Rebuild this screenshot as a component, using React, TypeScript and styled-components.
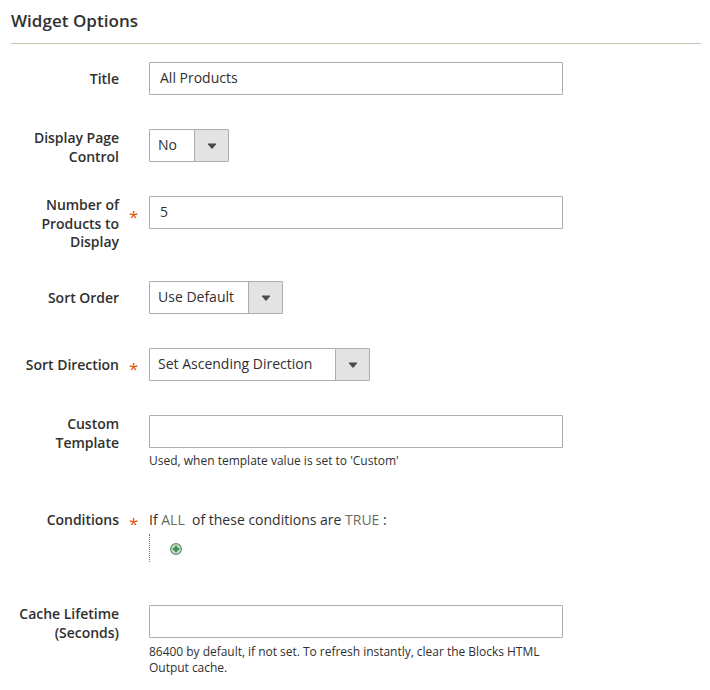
import React from 'react';
import styled, { createGlobalStyle } from 'styled-components';

const Global = createGlobalStyle`
  *{box-sizing:border-box}
  body{margin:0;background:#fff;color:#303030;font-family:"Open Sans",sans-serif;font-size:14px;line-height:19px}
`;
const Form = styled.form`width:710px;height:690px;padding:0 9px 0 11px;overflow:hidden;`;
const Legend = styled.h2`margin:0 0 18px;height:44px;padding-top:9px;border-bottom:1px solid #cac3b4;font-size:17px;line-height:24px;font-weight:600;letter-spacing:.03px;`;
const Row = styled.div<{ $h: number }>`display:grid;grid-template-columns:108px 30px 414px;height:${p => p.$h}px;`;
const Label = styled.label<{ $top?: number }>`font-weight:600;line-height:18.67px;text-align:right;padding-top:${p => p.$top ?? 8}px;white-space:pre-line;letter-spacing:-.03px;`;
const Required = styled.span`color:#eb5202;font-size:17px;line-height:19px;font-weight:500;padding:11px 0 0 10px;`;
const Input = styled.input`display:block;width:414px;height:33px;border:1px solid #adadad;border-radius:1px;padding:0 10px 2px;font:14px "Open Sans",sans-serif;color:#303030;outline:none;background:#fff;`;
const SelectBox = styled.div<{ $w: number }>`display:flex;width:${p => p.$w}px;height:33px;border:1px solid #adadad;border-radius:1px;line-height:30px;padding-left:8px;justify-content:space-between;white-space:nowrap;`;
const Arrow = styled.span`display:flex;align-items:center;justify-content:center;width:34px;height:31px;background:#e3e3e3;border-left:1px solid #adadad;padding:1px 0 0 1px;`;
const Note = styled.p<{ $gap?: number; $tight?: boolean }>`margin:${p => p.$gap ?? 5}px 0 0;font-size:12px;line-height:16px;white-space:pre-line;letter-spacing:${p => p.$tight ? '-.025px' : '0'};`;
const Rule = styled.div`padding-top:7px;white-space:pre;`;
const Value = styled.span`color:#686c60;`;
const Branch = styled.div`display:flex;align-items:center;margin-top:5px;height:28px;border-left:1px dotted #777;padding:2px 0 0 20px;`;

const Select = ({ width, value }: { width: number; value: string }) => (
  <SelectBox $w={width}><span>{value}</span><Arrow><svg width="8" height="6"><path d="M0 .4H8V1.2L4.7 5.6H3.3L0 1.2Z" fill="#514943" /></svg></Arrow></SelectBox>
);
const Field = ({ label, height, top, required, children }: { label: string; height: number; top?: number; required?: boolean; children: React.ReactNode }) => (
  <Row $h={height}><Label $top={top}>{label}</Label><Required>{required ? '*' : ''}</Required><div>{children}</div></Row>
);

export default function App() {
  return <><Global /><Form>
    <Legend>Widget Options</Legend>
    <Field label="Title" height={67}><Input defaultValue="All Products" /></Field>
    <Field label={'Display Page\nControl'} height={67} top={0}><Select width={80} value="No" /></Field>
    <Field label={'Number of\nProducts to\nDisplay'} height={85} top={0} required><Input defaultValue="5" /></Field>
    <Field label="Sort Order" height={67}><Select width={134} value="Use Default" /></Field>
    <Field label="Sort Direction" height={67} required><Select width={221} value="Set Ascending Direction" /></Field>
    <Field label={'Custom\nTemplate'} height={88} top={0}><Input /><Note>Used, when template value is set to 'Custom'</Note></Field>
    <Field label="Conditions" height={102} required>
      <Rule>If <Value>ALL</Value>  of these conditions are <Value>TRUE</Value> :</Rule>
      <Branch><svg width="12" height="12" viewBox="0 0 12 12"><circle cx="6" cy="6" r="5.4" fill="#c5dfc5" stroke="#66846b" strokeWidth="1.1" /><path d="M6 2.8V9.2M2.8 6H9.2" stroke="#3c9150" strokeWidth="2.4" /></svg></Branch>
    </Field>
    <Field label={'Cache Lifetime\n(Seconds)'} height={85} top={0}><Input /><Note $gap={6} $tight>{'86400 by default, if not set. To refresh instantly, clear the Blocks HTML\nOutput cache.'}</Note></Field>
  </Form></>;
}
